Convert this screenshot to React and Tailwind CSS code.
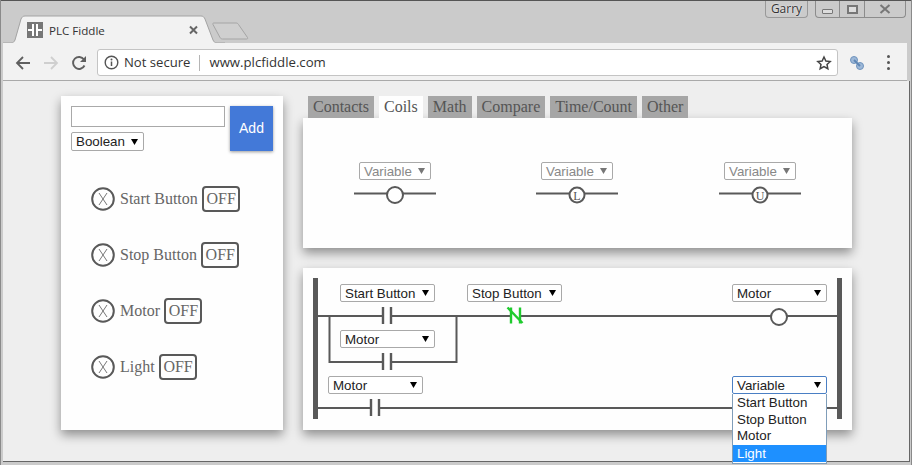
import React from 'react';

const serif = "font-['Liberation_Serif',serif]";
const sans = "font-['Liberation_Sans',sans-serif]";
const ui = "font-['Open_Sans',sans-serif]";

const variables = ['Start Button', 'Stop Button', 'Motor', 'Light'];

const tabs = ['Contacts', 'Coils', 'Math', 'Compare', 'Time/Count', 'Other'];

const Caret = ({ className = 'fill-black' }) => (
  <svg width="9" height="8" viewBox="0 0 9 8" className={className}>
    <path d="M1 1h7L4.500 7z" />
  </svg>
);

// fake <select>, the native one does not draw the same arrow
const Select = ({ label, className = 'h-[18px] w-[95px]', muted, focus }) => (
  <div
    className={`flex items-center justify-between whitespace-nowrap rounded-[2px] border bg-white pl-[4px] pr-[4.5px] text-[13.33px] leading-none ${sans} ${
      focus ? 'border-[#4a7fc4] text-[#222]' : muted ? 'border-[#a9a9a9] text-[#888]' : 'border-[#a9a9a9] text-[#222]'
    } ${className}`}
  >
    <span className="pt-[1px]">{label}</span>
    <Caret className={muted ? 'fill-[#777]' : 'fill-black'} />
  </div>
);

const CoilSymbol = ({ letter }) => (
  <svg width="82" height="26" viewBox="0 0 82 26" className="mt-[4px]">
    <path d="M0 9.5h82" stroke="#595959" strokeWidth="2" />
    <circle cx="41" cy="11" r={letter ? 7.5 : 8} fill="#fff" stroke="#595959" strokeWidth="2" />
    {letter && (
      <text x="41" y="15.5" textAnchor="middle" fontSize="12" fill="#555" fontFamily="Liberation Serif">
        {letter}
      </text>
    )}
  </svg>
);

const VariableRow = ({ name }) => (
  <div className={`flex h-[26px] items-center text-[16px] text-[#666] ${serif}`}>
    <svg width="24" height="24" viewBox="0 0 24 24" className="mr-[5px]">
      <circle cx="12" cy="12" r="10.8" fill="none" stroke="#595959" strokeWidth="2" />
      <path d="M8 6l8 12M16 6L8 18" stroke="#777" strokeWidth="1" fill="none" />
    </svg>
    <span>{name}</span>
    <span className="ml-[4.4px] flex h-[26px] w-[38px] items-center justify-center rounded-[4px] border-2 border-[#595959] text-[#666]">
      OFF
    </span>
  </div>
);

const Contact = ({ x, y }) => (
  <g>
    <rect x={x - 4} y={y - 1} width="8" height="2" fill="#fff" />
    <path d={`M${x - 4} ${y - 9}v17M${x + 4} ${y - 9}v17`} stroke="#595959" strokeWidth="2.4" />
  </g>
);

const LadderDrawing = () => (
  <svg width="549" height="162" viewBox="0 0 549 162" className="absolute left-0 top-0">
    <rect x="10" y="10" width="5" height="141" fill="#595959" />
    <rect x="534" y="10" width="5" height="141" fill="#595959" />
    <path d="M15 48h519M15 140h519" stroke="#595959" strokeWidth="2" fill="none" />
    <path d="M26.5 48v46h127v-46" stroke="#595959" strokeWidth="2" fill="none" />
    <Contact x={84} y={48} />
    <Contact x={84} y={94} />
    <Contact x={72} y={140} />
    {/* stop button contact is live so it is drawn green */}
    <rect x="208" y="47" width="9" height="2" fill="#fff" />
    <g stroke="#1fcb2e" fill="none">
      <path d="M208 39.5v16M217 39.5v16" strokeWidth="2.4" />
      <path d="M204.500 39.500l15 15.500" strokeWidth="2.4" />
    </g>
    <circle cx="476" cy="49" r="8" fill="#fff" stroke="#595959" strokeWidth="2" />
  </svg>
);

const Dropdown = () => (
  <div className={`absolute left-[429px] top-[126px] w-[95px] border border-t-0 border-[#7f9db9] bg-white pb-[1px] pt-[1px] text-[13.33px] text-[#222] ${sans}`}>
    <div className="h-[16.5px] pl-[4px] leading-[16.5px]">Start Button</div>
    <div className="h-[16.5px] pl-[4px] leading-[16.5px]">Stop Button</div>
    <div className="h-[16.5px] pl-[4px] leading-[16.5px]">Motor</div>
    <div className="h-[17px] bg-[#1e90ff] pl-[4px] leading-[17px] text-white">Light</div>
  </div>
);

const Chrome = () => (
  <>
    <div className="relative h-[43px] shrink-0 border-t border-[#555] bg-[#cbcbcb]">
      <svg width="250" height="43" viewBox="0 0 250 43" className="absolute left-[-1px] top-[-1px]">
        <path d="M3 44V43h8c2 0 3-1 4-3l6-21c1-2 2-3 4-3h176c2 0 3 1 4 3l8 21c1 2 2 3 4 3h8v1z" fill="#f2f2f2" stroke="#a3a3a3" />
        <path d="M214 23h22c1 0 2 .5 2.500 1.500l9 13c.5 1 0 1.500-1 1.500h-24c-1 0-2-.5-2.500-1.500l-7-13c-.5-1 0-1.500 1-1.500z" fill="#cfcfcf" stroke="#a5a5a5" />
        <rect x="27" y="22" width="16" height="16" fill="#777" />
        <path d="M28 30h5M37 30h5" stroke="#fff" strokeWidth="2" />
        <path d="M33 24v12M37 24v12" stroke="#fff" strokeWidth="2" />
        <path d="M190 26.500l7 7M197 26.500l-7 7" stroke="#666" strokeWidth="2" />
      </svg>
      <span className={`absolute left-[48px] top-[22px] text-[11.6px] leading-[16px] text-[#333] ${ui}`}>PLC Fiddle</span>

      <div className="absolute right-[5px] top-0 flex h-[17px] items-start">
        <div className={`mr-[7px] flex h-[17px] w-[43px] items-center justify-center rounded-b-[4px] border border-t-0 border-[#999] text-[12px] text-[#333] [text-shadow:0_0_2px_#fff] ${ui}`}>
          Garry
        </div>
        <div className="flex h-[17px] w-[91px] rounded-b-[4px] border border-t-0 border-[#8c8c8c]">
          <div className="flex w-[24px] items-end justify-center border-r border-[#8c8c8c] pb-[3px]">
            <div className="h-[5px] w-[11px] rounded-[1px] border border-[#777] bg-[#ddd]" />
          </div>
          <div className="flex w-[25px] items-center justify-center border-r border-[#8c8c8c]">
            <div className="h-[9px] w-[11px] border-2 border-[#777] bg-[#ddd]" />
          </div>
          <div className="flex flex-1 items-center justify-center">
            <svg width="12" height="10" viewBox="0 0 12 10">
              <path d="M1.500 1l9 8M10.500 1l-9 8" stroke="#777" strokeWidth="2" />
            </svg>
          </div>
        </div>
      </div>
    </div>

    <div className="ml-[2px] mr-[4px] flex h-[38px] shrink-0 items-center border-b border-[#a9a9a9] bg-[#f2f2f2] pt-[2px]">
      <svg width="16" height="16" viewBox="0 0 16 16" className="ml-[12px]">
        <path d="M15 8H2M8 2L2 8l6 6" fill="none" stroke="#5f5f5f" strokeWidth="1.800" />
      </svg>
      <svg width="16" height="16" viewBox="0 0 16 16" className="ml-[12px]">
        <path d="M1 8h13M8 2l6 6-6 6" fill="none" stroke="#cfcfcf" strokeWidth="1.800" />
      </svg>
      <svg width="16" height="16" viewBox="0 0 16 16" className="ml-[12px]">
        <path d="M13.500 10.500A6 6 0 1 1 13 4.500" fill="none" stroke="#5f5f5f" strokeWidth="1.900" />
        <path d="M15 1v6H9z" fill="#5f5f5f" />
      </svg>
      <div className="ml-[10px] flex h-[27px] w-[741px] items-center rounded-[3px] border border-[#c4c4c4] bg-white pl-[6px] pr-[5px]">
        <svg width="15" height="15" viewBox="0 0 15 15">
          <circle cx="7.500" cy="7.500" r="6.300" fill="none" stroke="#555" strokeWidth="1.400" />
          <path d="M7.500 6.500v4.500" stroke="#555" strokeWidth="1.500" />
          <circle cx="7.500" cy="4.500" r="1" fill="#555" />
        </svg>
        <span className={`ml-[5px] text-[13.1px] text-[#333] ${ui}`}>Not secure</span>
        <div className="ml-[9px] h-[16px] w-px bg-[#b5b5b5]" />
        <span className={`ml-[9px] flex-1 text-[13.2px] text-[#333] ${ui}`}>www.plcfiddle.com</span>
        <svg width="16" height="16" viewBox="0 0 24 24" fill="none" stroke="#444" strokeWidth="2.200">
          <path d="M12 3l2.800 6 6.500.8-4.800 4.400 1.300 6.400L12 17.400l-5.800 3.200 1.300-6.400L2.700 9.800 9.200 9z" />
        </svg>
      </div>
      <svg width="16" height="16" viewBox="0 0 16 16" className="ml-[11px]">
        <circle cx="5" cy="5" r="3.500" fill="#9db8d8" stroke="#6f93bd" />
        <circle cx="11" cy="11" r="3.500" fill="#9db8d8" stroke="#6f93bd" />
        <path d="M5 5l6 6" stroke="#5e86b5" strokeWidth="2" />
      </svg>
      <div className="ml-[22px] flex flex-col gap-[3px]">
        <div className="h-[3px] w-[3px] rounded-full bg-[#555]" />
        <div className="h-[3px] w-[3px] rounded-full bg-[#555]" />
        <div className="h-[3px] w-[3px] rounded-full bg-[#555]" />
      </div>
    </div>
  </>
);

export default function App() {
  return (
    <div className="flex h-[465px] w-[912px] flex-col overflow-hidden border-x border-[#8a8a8a] bg-[#cbcbcb]">
      <Chrome />

      {/* page */}
      <div className="ml-[2px] mr-[1px] flex h-[381px] shrink-0 items-start gap-[20px] border-b border-r border-[#666] bg-[#eeeeee] pl-[58px] pt-[15px]">
        <aside className="h-[334px] w-[222px] bg-[#fefefe] pl-[10px] pt-[10px] shadow-[0_5px_10px_rgba(0,0,0,0.4)]">
          <div className="flex gap-[5px] pr-[10px]">
            <div className="w-[154px]">
              <div className="h-[21px] border border-[#a9a9a9] bg-white" />
              <Select label="Boolean" className="mt-[5px] h-[19px] w-[73px]" />
            </div>
            <button className={`h-[45px] w-[43px] bg-[#4379d8] text-[14px] text-white shadow-[0_1px_3px_rgba(0,0,0,0.4)] ${sans}`}>Add</button>
          </div>
          <div className="ml-[20px] mt-[35px] flex flex-col gap-[30px]">
            {variables.map((v) => (
              <VariableRow key={v} name={v} />
            ))}
          </div>
        </aside>

        <main className="w-[549px]">
          <div className={`flex gap-[5px] pl-[5px] text-[16px] ${serif}`}>
            {tabs.map((t) => (
              <div
                key={t}
                className={`flex h-[22px] items-center px-[5px] ${t === 'Coils' ? 'bg-[#fefefe] text-[#555]' : 'bg-[#a6a6a6] text-[#555]'}`}
              >
                {t}
              </div>
            ))}
          </div>

          <section className="grid h-[130px] grid-cols-[182px_183px_82px] bg-[#fefefe] pl-[51px] pt-[44px] shadow-[0_5px_10px_rgba(0,0,0,0.4)]">
            {[null, 'L', 'U'].map((letter, i) => (
              <div key={i} className="flex w-[82px] flex-col items-center">
                <Select label="Variable" muted className="h-[18px] w-[72px]" />
                <CoilSymbol letter={letter} />
              </div>
            ))}
          </section>

          <section className="relative mt-[20px] h-[162px] bg-[#fefefe] shadow-[0_5px_10px_rgba(0,0,0,0.4)]">
            <LadderDrawing />
            <Select label="Start Button" className="absolute left-[37px] top-[16px] h-[18px] w-[95px]" />
            <Select label="Stop Button" className="absolute left-[164px] top-[16px] h-[18px] w-[95px]" />
            <Select label="Motor" className="absolute left-[429px] top-[16px] h-[18px] w-[95px]" />
            <Select label="Motor" className="absolute left-[37px] top-[62px] h-[18px] w-[95px]" />
            <Select label="Motor" className="absolute left-[25px] top-[108px] h-[18px] w-[95px]" />
            <Select label="Variable" focus className="absolute left-[429px] top-[108px] h-[18px] w-[95px]" />
            <Dropdown />
          </section>
        </main>
      </div>
    </div>
  );
}
